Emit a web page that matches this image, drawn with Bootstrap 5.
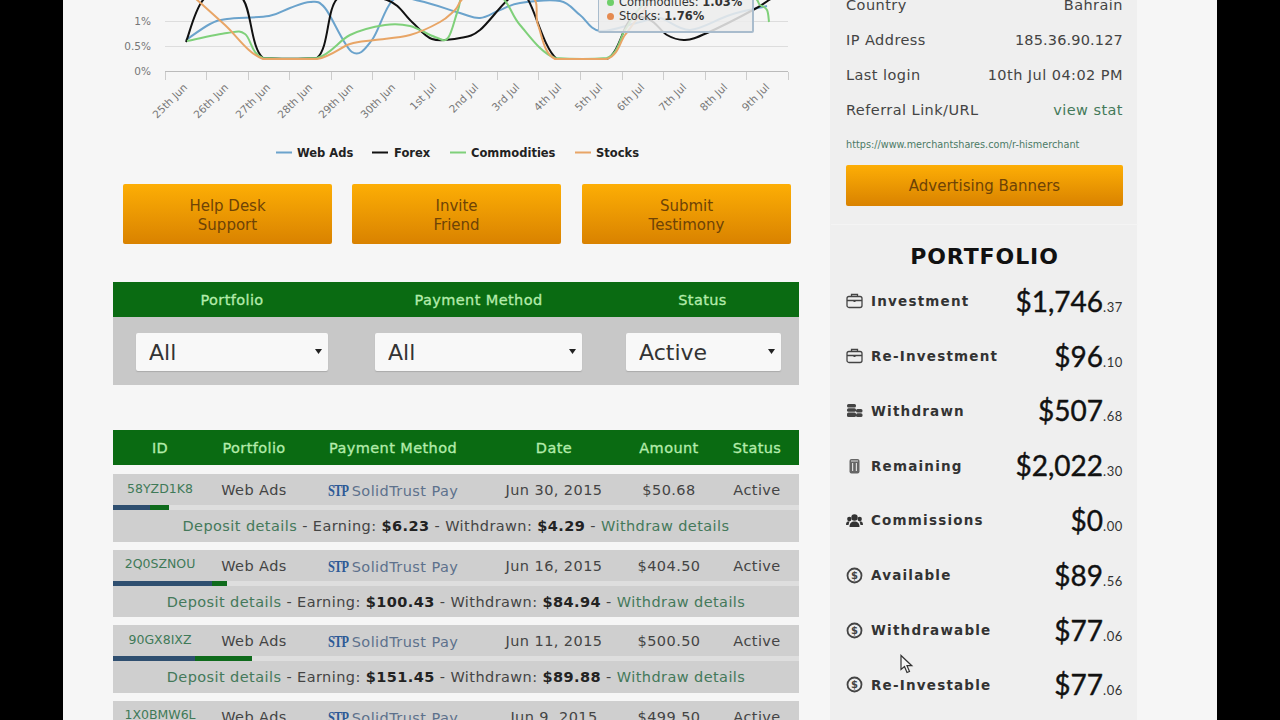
<!DOCTYPE html>
<html lang="en">
<head>
    <meta charset="UTF-8">
    <meta name="viewport" content="width=device-width, initial-scale=1.0">
    <title>Merchant Shares - Dashboard</title>

    <!-- Bootstrap CSS -->
    <link rel="stylesheet" href="https://cdn.jsdelivr.net/npm/bootstrap@5.3.0/dist/css/bootstrap.min.css">

    <style>
        html, body {
            height: 720px;
            overflow: hidden;
            background: #000;
        }

        body {
            font-family: "DejaVu Sans", sans-serif;
            color: #333;
        }

        a {
            text-decoration: none;
        }

        .shell {
            width: 1154px;
            height: 720px;
            margin-left: 63px;
            background: #f6f6f6;
            overflow: hidden;
        }

        .main-col {
            width: 686px;
            margin-left: 50px;
            flex: none;
        }

        .side-col {
            width: 307px;
            margin-left: 31px;
            padding: 0 14px 0 16px;
            background: #efefef;
            flex: none;
        }

        /* Chart */
        .chart-box {
            height: 175px;
        }

        .chart-box svg {
            display: block;
            overflow: hidden;
        }

        .chart-axis {
            font-size: 10.5px;
            fill: #777;
        }

        .chart-legend {
            font-size: 11.5px;
            font-weight: 700;
            fill: #222;
        }

        .chart-tip {
            top: -13px;
            left: 485px;
            width: 156px;
            height: 46px;
            padding: 7px 0 0 8px;
            background: rgba(236, 236, 236, .86);
            border: 1px solid #a9bccd;
            border-right-width: 2px;
            border-bottom-width: 2px;
            border-radius: 2px;
            font-size: 11.5px;
            line-height: 14px;
            color: #333;
        }

        .tip-dot {
            display: inline-block;
            width: 7px;
            height: 7px;
            margin-right: 5px;
            border-radius: 50%;
        }

        /* Orange buttons */
        .action-row {
            margin-top: 9px;
            padding: 0 8px 0 10px;
            gap: 20px;
        }

        .action-row .btn-amber:last-child {
            margin-left: 1px;
        }

        .btn-amber {
            width: 209px;
            height: 60px;
            padding: 13px 0 0;
            background: linear-gradient(#fdae05, #d98200);
            border: 0;
            border-radius: 2px;
            color: #6e4306;
            font-size: 15px;
            line-height: 18.5px;
        }

        /* Filter + deposit grids */
        .green-head {
            background: #0a6b12;
            color: #b4ecab;
            font-size: 14.5px;
            letter-spacing: .4px;
            -webkit-text-stroke: .3px #b4ecab;
            height: 35px;
            padding-top: 3px;
            align-items: center;
            text-align: center;
        }

        .filter-panel {
            margin-top: 38px;
        }

        .filter-grid {
            display: grid;
            grid-template-columns: 238px 255px 193px;
        }

        .filter-body {
            height: 68px;
            background: #c8c8c8;
            align-items: center;
            padding-top: 1px;
        }

        .filter-body .form-select {
            height: 38px;
            padding: 1px 0 0 13px;
            border: 0;
            border-radius: 2px;
            background-color: #f8f8f8;
            background-size: 7px 5px;
            background-position: right 6px center;
            background-image: url("data:image/svg+xml,%3csvg xmlns='http://www.w3.org/2000/svg' viewBox='0 0 7 5'%3e%3cpath d='M0 0h7L3.5 5z' fill='%23222'/%3e%3c/svg%3e");
            box-shadow: 0 1px 1px #aaa;
            color: #333;
            font-size: 22px;
        }

        .sel-a { width: 192px; margin-left: 23px; }
        .sel-b { width: 207px; margin-left: 24px; }
        .sel-c { width: 155px; margin-left: 20px; }

        .deposit-panel {
            margin-top: 45px;
        }

        .dep-grid {
            display: grid;
            grid-template-columns: 94px 94px 184px 138px 92px 84px;
            text-align: center;
        }

        .dep-head {
            margin-bottom: 9px;
        }

        .dep-item {
            margin-bottom: 8px;
            background: #cfcfcf;
            font-size: 14.5px;
            letter-spacing: .42px;
            color: #444;
        }

        .dep-top {
            height: 31px;
            padding-top: 3px;
            align-items: center;
        }

        .dep-id {
            font-size: 12.5px;
            letter-spacing: 0;
            color: #3f7a58;
            padding-bottom: 4px;
        }

        .dep-pay {
            color: #5d718c;
            white-space: nowrap;
        }

        .stp-logo {
            display: inline-block;
            width: 17px;
            margin-right: 7px;
            font-family: "Liberation Serif", serif;
            font-size: 17px;
            font-weight: 700;
            letter-spacing: -1px;
            color: #2c5a96;
            transform: scaleX(.72);
            transform-origin: left center;
        }

        .dep-bar {
            height: 5px;
            background: #dedede;
            border-radius: 0;
        }

        .bar-blue { background: #2f4f70; }
        .bar-green { background: #0f6b1c; }

        .dep-info {
            height: 31.5px;
            line-height: 33px;
            text-align: center;
        }

        .dep-info a, .green-link {
            color: #44795a;
        }

        .dep-info b {
            color: #222;
        }

        /* Sidebar */
        .acct-list {
            margin-top: -12px;
        }

        .acct-row {
            height: 35px;
            font-size: 14.5px;
            color: #444;
            letter-spacing: .45px;
        }

        .ip-value {
            letter-spacing: .15px;
        }

        .ref-url {
            margin-top: 9px;
            font-size: 9.7px;
            line-height: 16px;
            color: #4b7a66;
            white-space: nowrap;
        }

        .btn-amber-wide {
            width: 100%;
            height: 41px;
            margin-top: 12px;
            padding: 0;
            line-height: 43px;
        }

        .side-rule {
            margin: 18px -15px 0;
            border-top: 1px solid #f4f4f4;
        }

        .side-title {
            margin: 19px 0 4px;
            font-size: 22px;
            line-height: 26px;
            font-weight: 700;
            color: #111;
            text-align: center;
            letter-spacing: .9px;
        }

        .pf-row {
            height: 54.8px;
        }

        .pf-row svg {
            flex: none;
            margin-right: 8px;
        }

        .pf-label {
            font-size: 13.5px;
            font-weight: 700;
            color: #333;
            letter-spacing: 1.2px;
        }

        .pf-amount {
            margin-left: auto;
            padding-top: 5px;
            font-family: Lato, sans-serif;
            font-size: 28px;
            line-height: 34px;
            color: #111;
            -webkit-text-stroke: .4px #111;
        }

        .pf-amount small {
            font-size: 13px;
            letter-spacing: .6px;
            color: #333;
            -webkit-text-stroke: 0;
        }

        .mouse-arrow {
            left: 899px;
            top: 654px;
        }
    </style>
</head>
<body>

    <div class="shell d-flex">

        <!-- Main column -->
        <div class="main-col">

            <!-- Chart -->
            <div class="chart-box position-relative">
                <svg id="chart" width="686" height="175" viewBox="113 0 686 175">
                    <g stroke="#ddd" fill="none">
                        <path d="M165 21.5H788M165 46.5H788"/>
                        <path d="M165 71.5H788" stroke="#bbb"/>
                        <path stroke="#ccc" d="M165.5 72v8M206.5 72v8M248.5 72v8M289.5 72v8M331.5 72v8M372.5 72v8M414.5 72v8M455.5 72v8M497.5 72v8M538.5 72v8M580.5 72v8M622.5 72v8M663.5 72v8M705.5 72v8M746.5 72v8M788.5 72v8"/>
                    </g>
                    <g id="lines" fill="none" stroke-width="2"></g>
                    <g class="chart-axis" text-anchor="end">
                        <text x="151" y="25">1%</text>
                        <text x="151" y="50">0.5%</text>
                        <text x="151" y="75">0%</text>
                        <text transform="translate(188 88) rotate(-45)">25th Jun</text>
                        <text transform="translate(229 88) rotate(-45)">26th Jun</text>
                        <text transform="translate(271 88) rotate(-45)">27th Jun</text>
                        <text transform="translate(313 88) rotate(-45)">28th Jun</text>
                        <text transform="translate(354 88) rotate(-45)">29th Jun</text>
                        <text transform="translate(396 88) rotate(-45)">30th Jun</text>
                        <text transform="translate(437 88) rotate(-45)">1st Jul</text>
                        <text transform="translate(479 88) rotate(-45)">2nd Jul</text>
                        <text transform="translate(520 88) rotate(-45)">3rd Jul</text>
                        <text transform="translate(562 88) rotate(-45)">4th Jul</text>
                        <text transform="translate(603 88) rotate(-45)">5th Jul</text>
                        <text transform="translate(645 88) rotate(-45)">6th Jul</text>
                        <text transform="translate(687 88) rotate(-45)">7th Jul</text>
                        <text transform="translate(728 88) rotate(-45)">8th Jul</text>
                        <text transform="translate(770 88) rotate(-45)">9th Jul</text>
                    </g>
                    <g stroke-width="2">
                        <path d="M276 152.5h16" stroke="#6ba3cc"/>
                        <path d="M372 152.5h16" stroke="#111"/>
                        <path d="M450 152.5h16" stroke="#7fd07a"/>
                        <path d="M575 152.5h16" stroke="#e8a566"/>
                    </g>
                    <g class="chart-legend">
                        <text x="297" y="157">Web Ads</text>
                        <text x="394" y="157">Forex</text>
                        <text x="471" y="157">Commodities</text>
                        <text x="596" y="157">Stocks</text>
                    </g>
                </svg>
                <div class="chart-tip position-absolute">
                    <div><span class="tip-dot" style="background:#6fcf6a"></span>Commodities: <b>1.03%</b></div>
                    <div><span class="tip-dot" style="background:#e58a50"></span>Stocks: <b>1.76%</b></div>
                </div>
            </div>

            <!-- Buttons -->
            <div class="action-row d-flex">
                <a href="#" class="btn btn-amber">Help Desk<br>Support</a>
                <a href="#" class="btn btn-amber">Invite<br>Friend</a>
                <a href="#" class="btn btn-amber">Submit<br>Testimony</a>
            </div>

            <!-- Filter -->
            <div class="filter-panel">
                <div class="filter-grid green-head">
                    <div>Portfolio</div>
                    <div>Payment Method</div>
                    <div>Status</div>
                </div>
                <div class="filter-grid filter-body">
                    <select class="form-select sel-a"><option>All</option></select>
                    <select class="form-select sel-b"><option>All</option></select>
                    <select class="form-select sel-c"><option>Active</option></select>
                </div>
            </div>

            <!-- Deposits -->
            <div class="deposit-panel">
                <div class="dep-grid green-head dep-head">
                    <div>ID</div>
                    <div>Portfolio</div>
                    <div>Payment Method</div>
                    <div>Date</div>
                    <div>Amount</div>
                    <div>Status</div>
                </div>

                <div class="dep-item">
                    <div class="dep-grid dep-top">
                        <a href="#" class="dep-id">58YZD1K8</a>
                        <div>Web Ads</div>
                        <div class="dep-pay"><span class="stp-logo">STP</span>SolidTrust Pay</div>
                        <div>Jun 30, 2015</div>
                        <div>$50.68</div>
                        <div>Active</div>
                    </div>
                    <div class="progress dep-bar">
                        <div class="progress-bar bar-blue" style="width:37px"></div>
                        <div class="progress-bar bar-green" style="width:19px"></div>
                    </div>
                    <div class="dep-info"><a href="#">Deposit details</a> - Earning: <b>$6.23</b> - Withdrawn: <b>$4.29</b> - <a href="#">Withdraw details</a></div>
                </div>

                <div class="dep-item">
                    <div class="dep-grid dep-top">
                        <a href="#" class="dep-id">2Q0SZNOU</a>
                        <div>Web Ads</div>
                        <div class="dep-pay"><span class="stp-logo">STP</span>SolidTrust Pay</div>
                        <div>Jun 16, 2015</div>
                        <div>$404.50</div>
                        <div>Active</div>
                    </div>
                    <div class="progress dep-bar">
                        <div class="progress-bar bar-blue" style="width:99px"></div>
                        <div class="progress-bar bar-green" style="width:15px"></div>
                    </div>
                    <div class="dep-info"><a href="#">Deposit details</a> - Earning: <b>$100.43</b> - Withdrawn: <b>$84.94</b> - <a href="#">Withdraw details</a></div>
                </div>

                <div class="dep-item">
                    <div class="dep-grid dep-top">
                        <a href="#" class="dep-id">90GX8IXZ</a>
                        <div>Web Ads</div>
                        <div class="dep-pay"><span class="stp-logo">STP</span>SolidTrust Pay</div>
                        <div>Jun 11, 2015</div>
                        <div>$500.50</div>
                        <div>Active</div>
                    </div>
                    <div class="progress dep-bar">
                        <div class="progress-bar bar-blue" style="width:82px"></div>
                        <div class="progress-bar bar-green" style="width:57px"></div>
                    </div>
                    <div class="dep-info"><a href="#">Deposit details</a> - Earning: <b>$151.45</b> - Withdrawn: <b>$89.88</b> - <a href="#">Withdraw details</a></div>
                </div>

                <div class="dep-item">
                    <div class="dep-grid dep-top">
                        <a href="#" class="dep-id">1X0BMW6L</a>
                        <div>Web Ads</div>
                        <div class="dep-pay"><span class="stp-logo">STP</span>SolidTrust Pay</div>
                        <div>Jun 9, 2015</div>
                        <div>$499.50</div>
                        <div>Active</div>
                    </div>
                </div>
            </div>
        </div>

        <!-- Sidebar -->
        <div class="side-col">
            <div class="acct-list">
                <div class="acct-row d-flex justify-content-between align-items-center"><span>Country</span><span>Bahrain</span></div>
                <div class="acct-row d-flex justify-content-between align-items-center"><span>IP Address</span><span class="ip-value">185.36.90.127</span></div>
                <div class="acct-row d-flex justify-content-between align-items-center"><span>Last login</span><span>10th Jul 04:02 PM</span></div>
                <div class="acct-row d-flex justify-content-between align-items-center"><span>Referral Link/URL</span><a href="#" class="green-link">view stat</a></div>
            </div>
            <div class="ref-url">https://www.merchantshares.com/r-hismerchant</div>
            <a href="#" class="btn btn-amber btn-amber-wide">Advertising Banners</a>
            <div class="side-rule"></div>

            <div class="side-title">PORTFOLIO</div>

            <div class="pf-row d-flex align-items-center">
                <svg width="17" height="16" viewBox="0 0 17 16" fill="none" stroke="#444" stroke-width="1.3"><rect x="1" y="3.5" width="15" height="11" rx="2"/><path d="M5.5 3.5V1.5h6v2M1 7.5h15"/><path d="M8.5 7v2" stroke-width="2"/></svg>
                <span class="pf-label">Investment</span>
                <span class="pf-amount">$1,746<small>.37</small></span>
            </div>
            <div class="pf-row d-flex align-items-center">
                <svg width="17" height="16" viewBox="0 0 17 16" fill="none" stroke="#444" stroke-width="1.3"><rect x="1" y="3.5" width="15" height="11" rx="2"/><path d="M5.5 3.5V1.5h6v2M1 7.5h15"/><path d="M8.5 7v2" stroke-width="2"/></svg>
                <span class="pf-label">Re-Investment</span>
                <span class="pf-amount">$96<small>.10</small></span>
            </div>
            <div class="pf-row d-flex align-items-center">
                <svg width="17" height="16" viewBox="0 0 17 16" fill="#444"><rect x="1" y="1" width="9" height="3.5" rx="1.5"/><rect x="1" y="5.2" width="9" height="3.5" rx="1.5"/><rect x="1" y="9.4" width="9" height="4.5" rx="1.5"/><rect x="10" y="6" width="6.5" height="3.5" rx="1.5"/><rect x="10" y="10.2" width="6.5" height="3.7" rx="1.5"/></svg>
                <span class="pf-label">Withdrawn</span>
                <span class="pf-amount">$507<small>.68</small></span>
            </div>
            <div class="pf-row d-flex align-items-center">
                <svg width="17" height="16" viewBox="0 0 17 16" fill="#666"><rect x="3.5" y="1" width="10" height="14.5" rx="2"/><path d="M6 5h1.2v8H6zM9.8 5H11v8H9.800z" fill="#ddd"/><path d="M5 3h7" stroke="#ddd"/></svg>
                <span class="pf-label">Remaining</span>
                <span class="pf-amount">$2,022<small>.30</small></span>
            </div>
            <div class="pf-row d-flex align-items-center">
                <svg width="17" height="16" viewBox="0 0 17 16" fill="#333"><circle cx="8.500" cy="4.500" r="3.200"/><path d="M3.500 14c0-4 2-5.500 5-5.500s5 1.500 5 5.500z"/><circle cx="3.300" cy="6" r="2.200"/><circle cx="13.700" cy="6" r="2.200"/><path d="M0 12c0-3 1-3.800 3.500-3.800L2.500 12zM17 12c0-3-1-3.800-3.500-3.800l1 3.800z"/></svg>
                <span class="pf-label">Commissions</span>
                <span class="pf-amount">$0<small>.00</small></span>
            </div>
            <div class="pf-row d-flex align-items-center">
                <svg width="17" height="17" viewBox="0 0 17 17"><circle cx="8.500" cy="8.500" r="7" fill="none" stroke="#444" stroke-width="1.800"/><text x="8.500" y="12" text-anchor="middle" font-size="10" font-weight="700" fill="#444">$</text></svg>
                <span class="pf-label">Available</span>
                <span class="pf-amount">$89<small>.56</small></span>
            </div>
            <div class="pf-row d-flex align-items-center">
                <svg width="17" height="17" viewBox="0 0 17 17"><circle cx="8.500" cy="8.500" r="7" fill="none" stroke="#444" stroke-width="1.800"/><text x="8.500" y="12" text-anchor="middle" font-size="10" font-weight="700" fill="#444">$</text></svg>
                <span class="pf-label">Withdrawable</span>
                <span class="pf-amount">$77<small>.06</small></span>
            </div>
            <div class="pf-row d-flex align-items-center">
                <svg width="17" height="17" viewBox="0 0 17 17"><circle cx="8.500" cy="8.500" r="7" fill="none" stroke="#444" stroke-width="1.800"/><text x="8.500" y="12" text-anchor="middle" font-size="10" font-weight="700" fill="#444">$</text></svg>
                <span class="pf-label">Re-Investable</span>
                <span class="pf-amount">$77<small>.06</small></span>
            </div>
        </div>
    </div>

    <!-- Mouse pointer caught in the capture -->
    <svg class="mouse-arrow position-absolute" width="16" height="21" viewBox="0 0 16 21"><path d="M2 1.500v14l3.500-3 2.500 6 2.500-1-2.500-5.800h4.800z" fill="#f6f6f6" stroke="#333" stroke-width="1.200"/></svg>

    <script src="https://cdn.jsdelivr.net/npm/bootstrap@5.3.0/dist/js/bootstrap.bundle.min.js"></script>

    <script>
        // Series read off the picture: [x, y] in page pixels
        const series = [
            { color: "#6ba3cc", pts: [[186,40],[210,24],[227,19],[269,16],[290,8],[310,2],[325,8],[352,52],[372,40],[393,0],[420,1],[460,13],[480,18],[500,10],[520,3],[560,1],[580,15],[600,31],[640,22],[660,18],[690,30],[730,15],[767,6]] },
            { color: "#111111", pts: [[186,42],[205,-2],[242,-2],[263,58],[317,58],[338,-2],[387,0],[412,22],[432,39],[460,38],[480,30],[510,-2],[527,-2],[557,59],[607,59],[630,20],[650,20],[667,35],[685,40],[707,33],[753,10],[772,-2]] },
            { color: "#7fd07a", pts: [[187,41],[227,33],[245,34],[263,58],[317,58],[350,35],[385,25],[410,26],[435,37],[448,38],[458,10],[465,-4],[500,-4],[520,25],[555,58],[607,58],[625,30],[640,8],[660,-4],[745,-4],[760,5],[767,10],[769,22]] },
            { color: "#e8a566", pts: [[195,-2],[225,25],[263,59],[317,59],[350,44],[375,40],[410,35],[440,22],[455,10],[470,-4],[530,-4],[538,25],[555,59],[607,59],[625,35],[640,15],[655,-4]] }
        ];

        function splinePath(pts) {
            let d = `M${pts[0][0]} ${pts[0][1]}`;
            for (let i = 0; i < pts.length - 1; i++) {
                let p0 = pts[i - 1] || pts[i], p1 = pts[i], p2 = pts[i + 1], p3 = pts[i + 2] || p2;
                let c1x = p1[0] + (p2[0] - p0[0]) / 6, c1y = Math.min(p1[1] + (p2[1] - p0[1]) / 6, 59);
                let c2x = p2[0] - (p3[0] - p1[0]) / 6, c2y = Math.min(p2[1] - (p3[1] - p1[1]) / 6, 59);
                d += `C${c1x} ${c1y} ${c2x} ${c2y} ${p2[0]} ${p2[1]}`;
            }
            return d;
        }

        let lines = document.getElementById("lines");
        series.forEach(s => {
            let path = document.createElementNS("http://www.w3.org/2000/svg", "path");
            path.setAttribute("d", splinePath(s.pts));
            path.setAttribute("stroke", s.color);
            lines.appendChild(path);
        });
    </script>

</body>
</html>
